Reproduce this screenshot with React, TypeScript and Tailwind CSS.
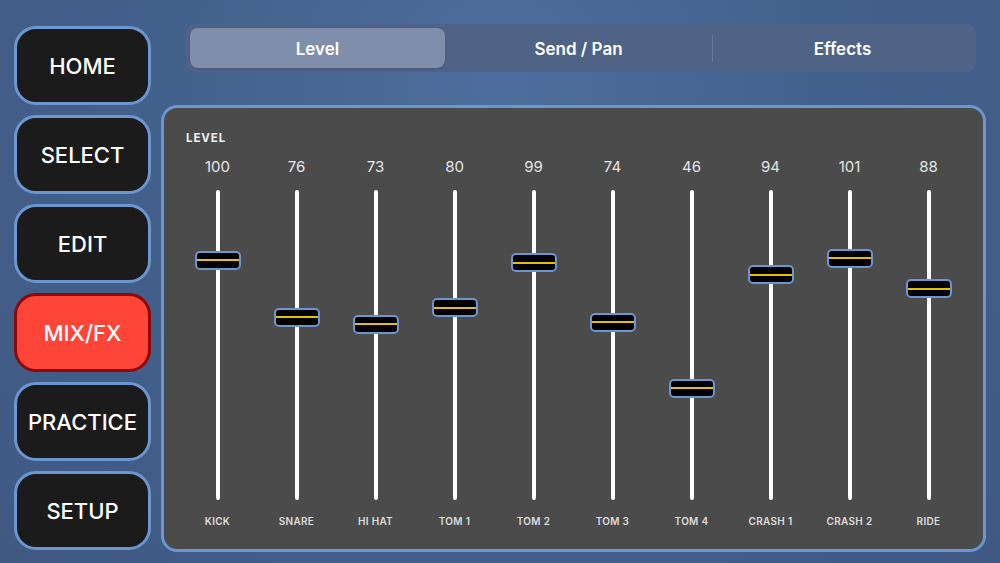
const navItems = ['HOME', 'SELECT', 'EDIT', 'MIX/FX', 'PRACTICE', 'SETUP']

const tabs = [
	{ label: 'Level', width: 'w-[255px]' },
	{ label: 'Send / Pan', width: 'w-[267px]' },
	{ label: 'Effects', width: 'flex-1' },
]

const channels = [
	{ name: 'KICK', value: 100 },
	{ name: 'SNARE', value: 76 },
	{ name: 'HI HAT', value: 73 },
	{ name: 'TOM 1', value: 80 },
	{ name: 'TOM 2', value: 99 },
	{ name: 'TOM 3', value: 74 },
	{ name: 'TOM 4', value: 46 },
	{ name: 'CRASH 1', value: 94 },
	{ name: 'CRASH 2', value: 101 },
	{ name: 'RIDE', value: 88 },
]

const NavButton = ({ label, active }: { label: string; active?: boolean }) => (
	<button
		className={
			active
				? 'w-[137px] h-[79px] pt-[2px] rounded-[22px] border-[3px] border-[#8a0a0a] bg-[#ff4438] text-white text-[22px] font-medium'
				: 'w-[137px] h-[79px] pt-[2px] rounded-[22px] border-[3px] border-[#6b96cf] bg-[#1b1b1b] text-white text-[22px] font-medium'
		}
	>
		{label}
	</button>
)

const Fader = ({ name, value }: { name: string; value: number }) => {
	// track spans 0..127, thumb centre moves from 497px (0) to 196px (127) on screen
	const top = 6 + (127 - value) * 2.37 - 9

	return (
		<div className="w-[79px] flex flex-col items-center">
			<div className="h-[18px] leading-[18px] text-[15px] text-[#e6e6e6]">{value}</div>
			<div className="relative mt-[14px] h-[310px] w-full flex justify-center">
				<div className="w-[4px] h-full rounded-full bg-white" />
				<div
					className="absolute left-1/2 -translate-x-1/2 w-[46px] h-[19px] rounded-[5px] border-2 border-[#6b96cf] bg-black flex items-center"
					style={{ top }}
				>
					<div className="w-full h-[2px] bg-[#e8c000]" />
				</div>
			</div>
			<div className="mt-[15px] h-[12px] leading-[12px] text-[10px] font-semibold text-[#dedede] tracking-[0.3px]">
				{name}
			</div>
		</div>
	)
}

export default function App() {
	return (
		<div
			className="w-[1000px] h-[563px] flex overflow-hidden bg-[radial-gradient(ellipse_at_50%_15%,#4e6e9d_0%,#43618d_45%,#3f5983_100%)]"
			style={{ fontFamily: 'Inter, "Liberation Sans", sans-serif' }}
		>
			<div className="pl-[14px] pt-[26px] flex flex-col gap-[10px]">
				{navItems.map((item) => (
					<NavButton key={item} label={item} active={item === 'MIX/FX'} />
				))}
			</div>

			<div className="ml-[10px] flex flex-col">
				<div className="mt-[24px] ml-[25px] mr-[10px] h-[48px] p-[4px] rounded-[10px] bg-[#4f6387] flex">
					{tabs.map((tab, i) => (
						<div key={tab.label} className={`${tab.width} flex items-center`}>
							{i === 2 && <div className="w-px h-[27px] bg-[#65789a]" />}
							<div
								className={
									i === 0
										? 'flex-1 h-full pt-[3px] rounded-[8px] bg-[#7f8fab] flex items-center justify-center text-white text-[17px] font-semibold shadow-sm'
										: 'flex-1 h-full pt-[3px] flex items-center justify-center text-white text-[17px] font-semibold'
								}
							>
								{tab.label}
							</div>
						</div>
					))}
				</div>

				<div className="mt-[33px] w-[825px] h-[447px] rounded-[16px] border-[3px] border-[#6b96cf] bg-[#4b4b4b] px-[14px] pt-[24px]">
					<div className="pl-[8px] h-[12px] leading-[12px] text-[11.5px] font-bold text-[#f0f0f0] tracking-[0.9px]">
						LEVEL
					</div>
					<div className="mt-[14px] flex">
						{channels.map((ch) => (
							<Fader key={ch.name} name={ch.name} value={ch.value} />
						))}
					</div>
				</div>
			</div>
		</div>
	)
}
